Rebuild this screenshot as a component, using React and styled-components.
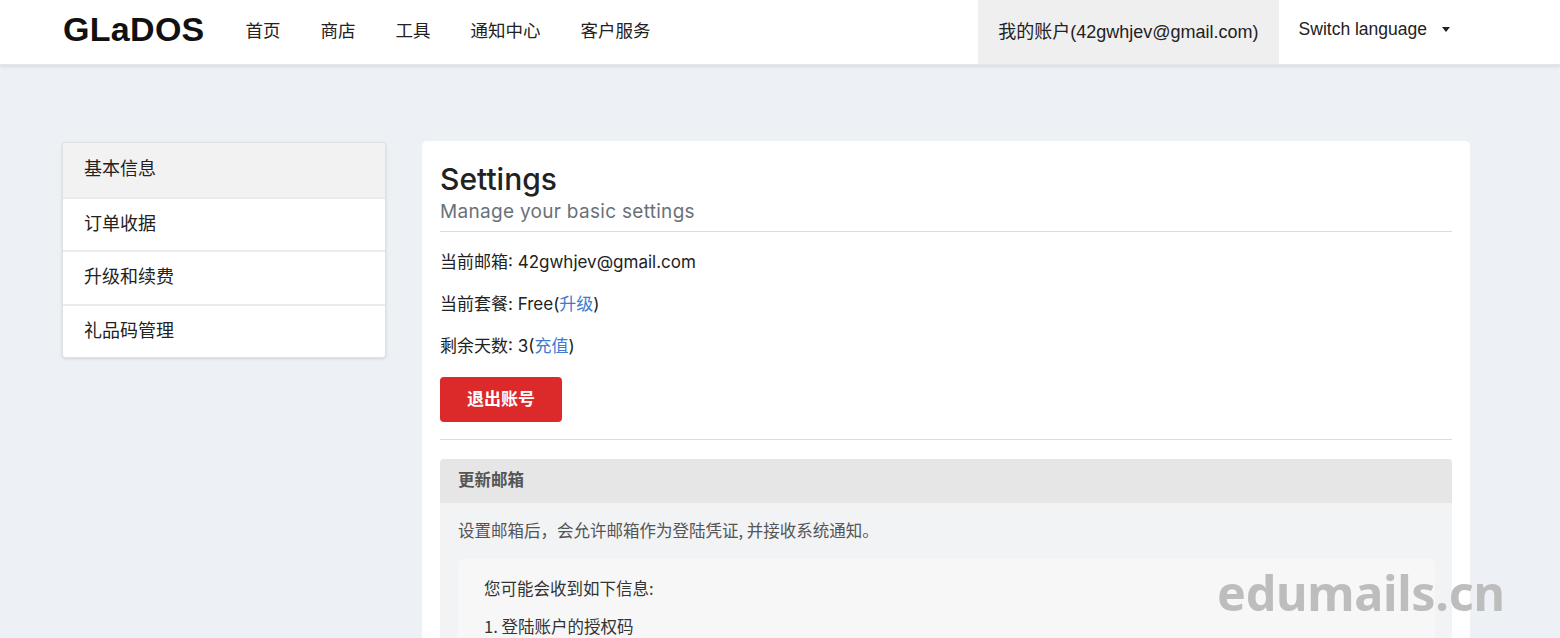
import React from "react";
import styled, { createGlobalStyle } from "styled-components";

const Global = createGlobalStyle`
  html, body { margin: 0; padding: 0; }
  body {
    background: #edf1f5;
    font-family: Inter, "Noto Sans CJK SC", sans-serif;
    color: #222;
    height: 638px;
    overflow: hidden;
  }
  * { box-sizing: border-box; }
`;

const Navbar = styled.header`
  height: 65px;
  background: #fff;
  box-shadow: 0 2px 3px rgba(0,0,0,0.08);
  display: flex;
  align-items: stretch;
  padding-left: 63px;
  border-bottom: 1px solid #e3e6ea;
`;

const Brand = styled.div`
  font-family: "Liberation Sans", "Noto Sans CJK SC", sans-serif;
  font-weight: bold;
  font-size: 34px;
  color: #111;
  display: flex;
  align-items: center;
  padding-bottom: 5px;
  margin-right: 21px;
  letter-spacing: 0.3px;
`;

const NavLink = styled.a`
  font-family: "Noto Sans CJK SC", sans-serif;
  font-size: 17.5px;
  color: #222;
  display: flex;
  align-items: center;
  padding: 0 20px 5px;
  text-decoration: none;
`;

const NavRight = styled.div`
  margin-left: auto;
  display: flex;
  align-items: stretch;
  margin-right: 90px;
`;

const AccountItem = styled.div`
  background: ${p => (p.$active ? "#efefef" : "transparent")};
  font-family: "Liberation Sans", "Noto Sans CJK SC", sans-serif;
  font-size: ${p => (p.$active ? "18px" : "17.5px")};
  color: #222;
  display: flex;
  align-items: center;
  padding: 0 20px 5px;
  gap: 15px;
`;

const Caret = styled.span`
  width: 0;
  height: 0;
  border-left: 4.5px solid transparent;
  border-right: 4.5px solid transparent;
  border-top: 5px solid #222;
`;

const Page = styled.main`
  display: grid;
  grid-template-columns: 324px 1048px;
  column-gap: 36px;
  padding: 76px 0 0 62px;
  align-items: start;
`;

const SideCard = styled.nav`
  background: #fff;
  border-radius: 4px;
  border: 1px solid #e0e0e0;
  box-shadow: 0 1px 3px rgba(0,0,0,0.12);
  overflow: hidden;
  margin-top: 1px;
`;

const SideItem = styled.div`
  height: 53.5px;
  display: flex;
  align-items: center;
  padding: 0 0 5px 21px;
  font-family: "Noto Sans CJK SC", sans-serif;
  font-size: 18px;
  color: #222;
  background: ${p => (p.$active ? "#f2f2f2" : "#fff")};
  & + & { border-top: 2px solid #e9ebee; }
`;

const MainCard = styled.section`
  background: #fff;
  border-radius: 5px;
  padding: 18px 18px 0 18px;
  height: 520px;
`;

const Title = styled.h1`
  margin: 0;
  font-family: Inter, sans-serif;
  font-weight: 500;
  font-size: 30px;
  line-height: 40px;
  color: #222;
`;

const Subtitle = styled.div`
  font-family: Inter, sans-serif;
  font-size: 19px;
  line-height: 26px;
  color: #6b7179;
  letter-spacing: 0.3px;
  padding-bottom: 6px;
  border-bottom: 1px solid #dcdcdc;
`;

const InfoLine = styled.p`
  margin: 18px 0 0;
  font-family: Inter, "Noto Sans CJK SC", sans-serif;
  font-size: 17px;
  line-height: 24px;
  color: #222;
  & + & { margin-top: 18px; }
`;

const Link = styled.a`
  color: #3c7bd0;
  text-decoration: none;
`;

const DangerButton = styled.button`
  margin-top: 19px;
  width: 122px;
  height: 45px;
  border: none;
  border-radius: 4px;
  background: #dc2a2b;
  color: #fff;
  font-family: "Noto Sans CJK SC", sans-serif;
  font-weight: 700;
  font-size: 17px;
  padding: 0 0 4px;
  display: block;
`;

const Divider = styled.hr`
  border: none;
  border-top: 1px solid #dcdcdc;
  margin: 17px 0 19px;
`;

const Panel = styled.div`
  border-radius: 4px 4px 0 0;
  background: #f2f3f5;
  overflow: hidden;
  height: 200px;
`;

const PanelHeader = styled.div`
  background: #e6e6e6;
  height: 44px;
  display: flex;
  align-items: center;
  padding: 0 0 4px 18px;
  font-family: "Noto Sans CJK SC", sans-serif;
  font-weight: 700;
  font-size: 16.5px;
  color: #555;
`;

const PanelBody = styled.div`
  padding: 16px 17px 0 18px;
`;

const PanelText = styled.p`
  margin: 0;
  font-family: "Noto Sans CJK SC", sans-serif;
  font-size: 16.5px;
  line-height: 22px;
  color: #555;
`;

const InnerBox = styled.div`
  margin-top: 18px;
  background: #f7f7f7;
  border-radius: 4px;
  padding: 18px 26px;
  height: 120px;
`;

const InnerLine = styled.p`
  margin: 0;
  font-family: "Noto Sans CJK SC", sans-serif;
  font-size: 16.5px;
  line-height: 22px;
  color: #333;
  & + & { margin-top: 16px; }
`;

const Watermark = styled.div`
  position: fixed;
  left: 1217px;
  top: 562px;
  font-family: "Noto Sans", sans-serif;
  font-weight: 700;
  font-size: 48.5px;
  line-height: 60px;
  color: #bdbdbd;
  letter-spacing: -0.3px;
  pointer-events: none;
`;

export default function App() {
  const navs = ["首页", "商店", "工具", "通知中心", "客户服务"];
  const side = ["基本信息", "订单收据", "升级和续费", "礼品码管理"];
  return (
    <>
      <Global />
      <Navbar>
        <Brand>GLaDOS</Brand>
        {navs.map(n => (
          <NavLink key={n}>{n}</NavLink>
        ))}
        <NavRight>
          <AccountItem $active>我的账户(42gwhjev@gmail.com)</AccountItem>
          <AccountItem>
            Switch language <Caret />
          </AccountItem>
        </NavRight>
      </Navbar>
      <Page>
        <SideCard>
          {side.map((s, i) => (
            <SideItem key={s} $active={i === 0}>{s}</SideItem>
          ))}
        </SideCard>
        <MainCard>
          <Title>Settings</Title>
          <Subtitle>Manage your basic settings</Subtitle>
          <InfoLine>当前邮箱: 42gwhjev@gmail.com</InfoLine>
          <InfoLine>当前套餐: Free(<Link>升级</Link>)</InfoLine>
          <InfoLine>剩余天数: 3(<Link>充值</Link>)</InfoLine>
          <DangerButton>退出账号</DangerButton>
          <Divider />
          <Panel>
            <PanelHeader>更新邮箱</PanelHeader>
            <PanelBody>
              <PanelText>设置邮箱后，会允许邮箱作为登陆凭证, 并接收系统通知。</PanelText>
              <InnerBox>
                <InnerLine>您可能会收到如下信息:</InnerLine>
                <InnerLine>1. 登陆账户的授权码</InnerLine>
              </InnerBox>
            </PanelBody>
          </Panel>
        </MainCard>
      </Page>
      <Watermark>edumails.cn</Watermark>
    </>
  );
}
